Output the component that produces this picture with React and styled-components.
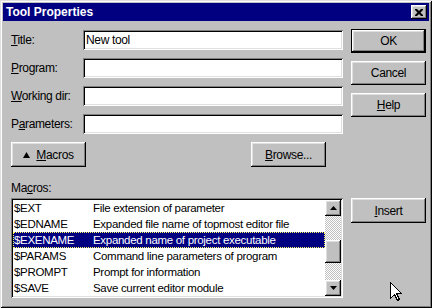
import React from 'react';
import styled, { createGlobalStyle, css } from 'styled-components';

const GlobalStyle = createGlobalStyle`
  html, body {
    margin: 0;
    padding: 0;
    background: #c0c0c0;
  }
  * {
    box-sizing: border-box;
  }
`;

const raised = css`
  box-shadow: inset -1px -1px #000, inset 1px 1px #fff, inset -2px -2px #808080,
    inset 2px 2px #dfdfdf;
`;

const sunken = css`
  box-shadow: inset 1px 1px #808080, inset -1px -1px #fff, inset 2px 2px #000,
    inset -2px -2px #dfdfdf;
`;

const Window = styled.div`
  position: relative;
  width: 432px;
  height: 308px;
  padding: 3px;
  background: #c0c0c0;
  box-shadow: inset 1px 1px #dfdfdf, inset -1px -1px #000, inset 2px 2px #fff,
    inset -2px -2px #808080;
  font-family: 'Liberation Sans', Arial, sans-serif;
  font-size: 12px;
  letter-spacing: -0.35px;
  color: #000;
`;

const TitleBar = styled.div`
  height: 18px;
  display: flex;
  align-items: center;
  justify-content: space-between;
  padding: 0 2px 0 3px;
  background: #000080;
  color: #fff;
  font-weight: bold;
  font-size: 12px;
  letter-spacing: 0;
`;

const CloseButton = styled.div`
  width: 16px;
  height: 14px;
  display: flex;
  align-items: center;
  justify-content: center;
  background: #c0c0c0;
  ${raised};
`;

const Body = styled.div`
  padding: 8px 3px 8px 8px;
`;

const Top = styled.div`
  display: flex;
  gap: 8px;
`;

const Fields = styled.div`
  width: 332px;
  padding-top: 1px;
  display: flex;
  flex-direction: column;
  gap: 8px;
`;

const FieldRow = styled.div`
  display: flex;
  align-items: center;
  height: 20px;
`;

const Label = styled.label`
  width: 72px;
  line-height: 14px;
`;

const Input = styled.div`
  width: 260px;
  height: 20px;
  padding: 3px 3px 0;
  background: #fff;
  line-height: 14px;
  ${sunken};
`;

const ButtonRow = styled.div`
  display: flex;
  justify-content: space-between;
  width: 315px;
`;

const Button = styled.div`
  width: 75px;
  height: ${(p) => p.h || 24}px;
  display: flex;
  align-items: center;
  justify-content: center;
  gap: 6px;
  background: #c0c0c0;
  ${raised};
  ${(p) =>
    p.$default &&
    css`
      box-shadow: inset 0 0 0 1px #000, inset -2px -2px #000, inset 2px 2px #fff,
        inset -3px -3px #808080, inset 3px 3px #dfdfdf;
    `}
`;

const Side = styled.div`
  width: 75px;
  display: flex;
  flex-direction: column;
  gap: 8px;
`;

const ListLabel = styled.div`
  margin: 15px 0 3px;
  line-height: 13px;
`;

const Bottom = styled.div`
  display: flex;
  gap: 8px;
  align-items: flex-start;
`;

const ListBox = styled.div`
  width: 332px;
  height: 100px;
  padding: 2px;
  display: flex;
  background: #fff;
  ${sunken};
`;

const Rows = styled.div`
  flex: 1;
  overflow: hidden;
  font-size: 11.5px;
  letter-spacing: -0.3px;
`;

const Row = styled.div`
  display: flex;
  height: 16px;
  line-height: 16px;
  ${(p) =>
    p.$selected &&
    css`
      background: #000080;
      color: #fff;
      outline: 1px dotted #ffff60;
      outline-offset: -1px;
    `}
`;

const Name = styled.span`
  width: 80px;
  padding-left: 1px;
`;

const Scrollbar = styled.div`
  width: 16px;
  display: flex;
  flex-direction: column;
  background-color: #fff;
  background-image: conic-gradient(#c0c0c0 25%, #fff 0 50%, #c0c0c0 0 75%, #fff 0);
  background-size: 2px 2px;
`;

const ScrollButton = styled.div`
  width: 16px;
  height: 16px;
  display: flex;
  align-items: center;
  justify-content: center;
  background: #c0c0c0;
  ${raised};
`;

const Thumb = styled(ScrollButton)`
  height: 23px;
  margin: 24px 0 auto;
`;

const U = styled.span`
  text-decoration: underline;
  text-underline-offset: 1px;
`;

const Pointer = styled.svg`
  position: absolute;
  left: 390px;
  top: 282px;
`;

const macros = [
  ['$EXT', 'File extension of parameter'],
  ['$EDNAME', 'Expanded file name of topmost editor file'],
  ['$EXENAME', 'Expanded name of project executable'],
  ['$PARAMS', 'Command line parameters of program'],
  ['$PROMPT', 'Prompt for information'],
  ['$SAVE', 'Save current editor module'],
];

const Arrow = ({ up }) => (
  <svg width="7" height="4" viewBox="0 0 7 4">
    <path d={up ? 'M3.5 0 L7 4 L0 4 Z' : 'M0 0 L7 0 L3.5 4 Z'} fill="#000" />
  </svg>
);

export default function App() {
  return (
    <>
      <GlobalStyle />
      <Window>
        <TitleBar>
          <span>Tool Properties</span>
          <CloseButton>
            <svg width="8" height="7" viewBox="0 0 8 7">
              <path d="M0 0h2l2 2 2-2h2v1l-2.5 2.5L8 6v1H6L4 5 2 7H0V6l2.5-2.5L0 1z" fill="#000" />
            </svg>
          </CloseButton>
        </TitleBar>
        <Body>
          <Top>
            <Fields>
              <FieldRow>
                <Label><U>T</U>itle:</Label>
                <Input>New tool</Input>
              </FieldRow>
              <FieldRow>
                <Label><U>P</U>rogram:</Label>
                <Input />
              </FieldRow>
              <FieldRow>
                <Label><U>W</U>orking dir:</Label>
                <Input />
              </FieldRow>
              <FieldRow>
                <Label>P<U>a</U>rameters:</Label>
                <Input />
              </FieldRow>
              <ButtonRow>
                <Button h={25}>
                  <svg width="7" height="6" viewBox="0 0 7 6">
                    <path d="M3.5 0 L7 6 L0 6 Z" fill="#000" />
                  </svg>
                  <span><U>M</U>acros</span>
                </Button>
                <Button h={25}>
                  <span><U>B</U>rowse...</span>
                </Button>
              </ButtonRow>
            </Fields>
            <Side>
              <Button $default>OK</Button>
              <Button>Cancel</Button>
              <Button><span><U>H</U>elp</span></Button>
            </Side>
          </Top>
          <ListLabel>Ma<U>c</U>ros:</ListLabel>
          <Bottom>
            <ListBox>
              <Rows>
                {macros.map(([name, desc]) => (
                  <Row key={name} $selected={name === '$EXENAME'}>
                    <Name>{name}</Name>
                    <span>{desc}</span>
                  </Row>
                ))}
              </Rows>
              <Scrollbar>
                <ScrollButton><Arrow up /></ScrollButton>
                <Thumb />
                <ScrollButton><Arrow /></ScrollButton>
              </Scrollbar>
            </ListBox>
            <Side>
              <Button h={25}><span><U>I</U>nsert</span></Button>
            </Side>
          </Bottom>
        </Body>
        <Pointer width="13" height="20" viewBox="0 0 13 20">
          <path
            d="M0.5 0.5 L0.5 16.5 L4.5 12.5 L7.5 18.5 L9.5 17.5 L6.5 11.5 L11.5 11.5 Z"
            fill="#fff"
            stroke="#000"
            strokeWidth="1"
            shapeRendering="crispEdges"
          />
        </Pointer>
      </Window>
    </>
  );
}
